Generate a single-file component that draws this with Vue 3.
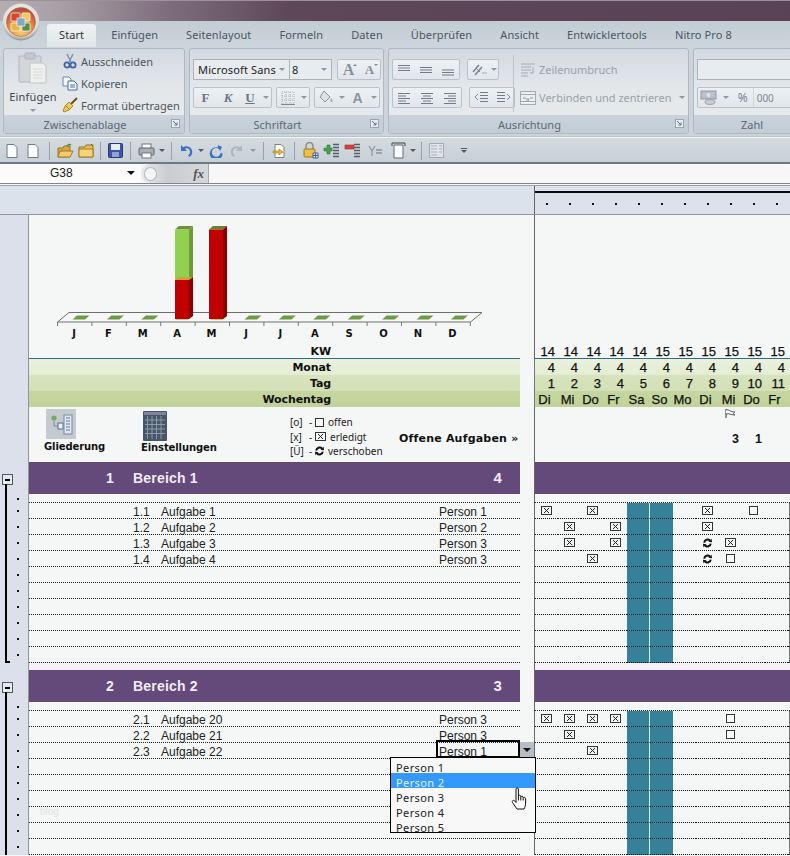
<script setup>
const tabs = ['Start', 'Einfügen', 'Seitenlayout', 'Formeln', 'Daten', 'Überprüfen', 'Ansicht', 'Entwicklertools', 'Nitro Pro 8']

const months = ['J', 'F', 'M', 'A', 'M', 'J', 'J', 'A', 'S', 'O', 'N', 'D']

const kw = [14, 14, 14, 14, 14, 15, 15, 15, 15, 15, 15]
const days = ['Di', 'Mi', 'Do', 'Fr', 'Sa', 'So', 'Mo', 'Di', 'Mi', 'Do', 'Fr']
const colNums = kw.map((_, i) => i + 1)

function fill(rows, total) {
  const out = rows.slice()
  while (out.length < total) out.push({ no: '', name: '', person: '', marks: {} })
  return out
}

const sections = [
  {
    no: 1,
    title: 'Bereich 1',
    count: 4,
    closed: true,
    rows: fill([
      { no: '1.1', name: 'Aufgabe 1', person: 'Person 1', marks: { 1: 'x', 3: 'x', 8: 'x', 10: 'o' } },
      { no: '1.2', name: 'Aufgabe 2', person: 'Person 2', marks: { 2: 'x', 4: 'x', 8: 'x' } },
      { no: '1.3', name: 'Aufgabe 3', person: 'Person 3', marks: { 2: 'x', 4: 'x', 8: 'u', 9: 'x' } },
      { no: '1.4', name: 'Aufgabe 4', person: 'Person 3', marks: { 3: 'x', 8: 'u', 9: 'o' } }
    ], 10)
  },
  {
    no: 2,
    title: 'Bereich 2',
    count: 3,
    closed: false,
    rows: fill([
      { no: '2.1', name: 'Aufgabe 20', person: 'Person 3', marks: { 1: 'x', 2: 'x', 3: 'x', 4: 'x', 9: 'o' } },
      { no: '2.2', name: 'Aufgabe 21', person: 'Person 3', marks: { 2: 'x', 9: 'o' } },
      { no: '2.3', name: 'Aufgabe 22', person: 'Person 1', marks: { 3: 'x' } }
    ], 9)
  }
]

const persons = ['Person 1', 'Person 2', 'Person 3', 'Person 4', 'Person 5']
</script>

<template>
  <div class="page">
    <svg class="defs" width="0" height="0">
      <symbol id="mark-x" viewBox="0 0 11 9">
        <rect x="0.5" y="0.5" width="10" height="8" fill="none" stroke="#333" />
        <path d="M3 2 L8 7 M8 2 L3 7" stroke="#222" fill="none" />
      </symbol>
      <symbol id="mark-o" viewBox="0 0 9 9">
        <rect x="0.5" y="0.5" width="8" height="8" fill="#fafafa" stroke="#333" />
      </symbol>
      <symbol id="mark-u" viewBox="0 0 9 10">
        <path d="M1.200 4.600 A3.500 3.500 0 0 1 7 2.400" fill="none" stroke="#111" stroke-width="2" />
        <path d="M5.500 3.800 L9 4.200 L8.600 .8 Z" fill="#111" />
        <path d="M7.800 5.600 A3.500 3.500 0 0 1 2 7.600" fill="none" stroke="#111" stroke-width="2" />
        <path d="M3.500 6.200 L0 5.800 L.4 9.200 Z" fill="#111" />
      </symbol>
      <symbol id="lines-left" viewBox="0 0 14 12">
        <path d="M1 1.5H13M1 4H9M1 6.5H13M1 9H9M1 11.5H13" stroke="#6f7b87" fill="none" />
      </symbol>
      <symbol id="lines-center" viewBox="0 0 14 12">
        <path d="M1 1.5H13M3 4H11M1 6.5H13M3 9H11M1 11.5H13" stroke="#6f7b87" fill="none" />
      </symbol>
      <symbol id="lines-right" viewBox="0 0 14 12">
        <path d="M1 1.5H13M5 4H13M1 6.5H13M5 9H13M1 11.5H13" stroke="#6f7b87" fill="none" />
      </symbol>
      <symbol id="launcher" viewBox="0 0 9 9">
        <rect x="0.5" y="0.5" width="8" height="8" fill="#e8ecf0" stroke="#9aa5b0" />
        <path d="M2 2 L6 6 M6 3.5 V6 H3.5" stroke="#5f6e7c" fill="none" />
      </symbol>
    </svg>

    <!-- office button -->
    <svg class="office" width="38" height="38" viewBox="0 0 38 38">
      <defs>
        <radialGradient id="ring" cx="50%" cy="40%" r="60%">
          <stop offset="0" stop-color="#f4f4f0" />
          <stop offset="0.8" stop-color="#dfe0da" />
          <stop offset="1" stop-color="#8d9088" />
        </radialGradient>
        <radialGradient id="core" cx="50%" cy="80%" r="70%">
          <stop offset="0" stop-color="#f5d477" />
          <stop offset="0.6" stop-color="#e8884a" />
          <stop offset="1" stop-color="#b9503a" />
        </radialGradient>
      </defs>
      <circle cx="19" cy="19" r="18.4" fill="url(#ring)" />
      <circle cx="19" cy="19" r="14.5" fill="url(#core)" stroke="#a8674a" stroke-width="0.6" />
      <rect x="9" y="10" width="9" height="8" rx="1" fill="#d2482f" stroke="#fff" stroke-width="0.7" />
      <rect x="20" y="10" width="8" height="8" rx="1" fill="#f0c95a" stroke="#fff" stroke-width="0.7" />
      <rect x="9" y="20" width="9" height="8" rx="1" fill="#e9b53c" stroke="#fff" stroke-width="0.7" />
      <rect x="20" y="20" width="8" height="8" rx="1" fill="#4f8f4b" stroke="#fff" stroke-width="0.7" />
      <rect x="15" y="15" width="8" height="8" fill="#7fa9c9" stroke="#fff" stroke-width="0.6" />
    </svg>

    <div class="titlebar"></div>

    <div class="tabs">
      <div v-for="(t, i) in tabs" :key="t" class="tab" :class="{ active: i === 0 }">{{ t }}</div>
    </div>

    <div class="ribbon">
      <section class="group g-clip">
        <div class="group-body clip-body">
          <div class="paste">
            <svg width="30" height="32" viewBox="0 0 30 32">
              <rect x="1" y="4" width="22" height="26" rx="1" fill="#d2d6da" stroke="#b3b8bd" />
              <rect x="7" y="1" width="10" height="6" rx="1" fill="#c4c8cc" stroke="#aeb3b8" />
              <path d="M12 11 H25 L28 14 V31 H12 Z" fill="#eff0ee" stroke="#c2c6c9" />
              <path d="M15 17H25M15 20H25M15 23H25M15 26H25" stroke="#d7d9da" />
            </svg>
            <span class="paste-label">Einfügen</span>
            <span class="caret paste-caret"></span>
          </div>
          <div class="clip-list">
            <div class="clip-item">
              <svg width="16" height="16" viewBox="0 0 16 16">
                <path d="M5 1 L9 9 M11 1 L7 9" stroke="#8a96a4" stroke-width="1.6" fill="none" />
                <circle cx="5" cy="12" r="2.6" fill="none" stroke="#3f63a8" stroke-width="1.8" />
                <circle cx="11" cy="12" r="2.6" fill="none" stroke="#3f63a8" stroke-width="1.8" />
              </svg>
              <span>Ausschneiden</span>
            </div>
            <div class="clip-item">
              <svg width="16" height="16" viewBox="0 0 16 16">
                <path d="M1 2H7L9 4V11H1Z" fill="#f4f6f8" stroke="#6c86a8" />
                <path d="M6 6H12L15 9V15H6Z" fill="#fff" stroke="#3f6aa3" />
                <path d="M8 10H13M8 12H13" stroke="#3f6aa3" />
              </svg>
              <span>Kopieren</span>
            </div>
            <div class="clip-item">
              <svg width="16" height="16" viewBox="0 0 16 16">
                <path d="M15 1 L9 7" stroke="#6d4d2a" stroke-width="2" />
                <path d="M7 5 L11 9 L7 13 L2 15 L1 14 L3 9 Z" fill="#e8c85a" stroke="#a98a2c" />
                <path d="M4 9 L7 12" stroke="#a98a2c" />
              </svg>
              <span>Format übertragen</span>
            </div>
          </div>
        </div>
        <footer class="group-label">Zwischenablage<svg class="launch" width="9" height="9"><use href="#launcher" /></svg></footer>
      </section>

      <section class="group g-font">
        <div class="group-body font-body">
          <div class="ctrl-row">
            <div class="combo font-name"><span>Microsoft Sans</span><span class="caret"></span></div>
            <div class="combo font-size"><span>8</span><span class="caret"></span></div>
            <div class="seg grow-seg">
              <span class="btn w21 big-a">A<i class="mini-up"></i></span>
              <span class="btn w21 small-a">A<i class="mini-down"></i></span>
            </div>
          </div>
          <div class="ctrl-row second">
            <div class="seg fku">
              <span class="btn w23 sf">F</span>
              <span class="btn w22 sf it">K</span>
              <span class="btn w22 sf un">U</span>
              <span class="btn w10"><span class="caret"></span></span>
            </div>
            <div class="seg bord">
              <span class="btn w22">
                <svg width="14" height="14" viewBox="0 0 14 14">
                  <path d="M1 1H13V13H1ZM1 5H13M1 9H13M5 1V13M9 1V13" stroke="#a7afb8" stroke-dasharray="1 1" fill="none" />
                  <path d="M0 13.5H14" stroke="#7f8a96" />
                </svg>
              </span>
              <span class="btn w11"><span class="caret"></span></span>
            </div>
            <div class="seg paint">
              <span class="btn w22">
                <svg width="16" height="15" viewBox="0 0 16 15">
                  <path d="M6 1 L12 7 L7 12 L2 7 Z" fill="#dfe2e4" stroke="#8c949c" />
                  <path d="M13 8 C15 10 15 12 13.5 12 C12 12 12 10 13 8Z" fill="#a6adb4" />
                </svg>
              </span>
              <span class="btn w11"><span class="caret"></span></span>
              <span class="btn w22 sf paint-a">A</span>
              <span class="btn w11"><span class="caret"></span></span>
            </div>
          </div>
        </div>
        <footer class="group-label">Schriftart<svg class="launch" width="9" height="9"><use href="#launcher" /></svg></footer>
      </section>

      <section class="group g-align">
        <div class="group-body align-body">
          <div class="align-grid">
            <div class="ctrl-row">
              <div class="seg">
                <span class="btn w22"><svg width="14" height="12" viewBox="0 0 14 12"><path d="M1 1.5H13M1 4H13M1 6.5H13" stroke="#6f7b87" /></svg></span>
                <span class="btn w22"><svg width="14" height="12" viewBox="0 0 14 12"><path d="M1 3.5H13M1 6H13M1 8.5H13" stroke="#6f7b87" /></svg></span>
                <span class="btn w22"><svg width="14" height="12" viewBox="0 0 14 12"><path d="M1 6H13M1 8.5H13M1 11H13" stroke="#6f7b87" /></svg></span>
              </div>
              <div class="seg orient">
                <span class="btn w21">
                  <svg width="16" height="14" viewBox="0 0 16 14">
                    <path d="M2 9 L8 2 M4 12 L11 4" stroke="#7b8793" stroke-width="1.6" />
                    <path d="M5 5 L9 9" stroke="#7b8793" />
                    <path d="M11 10 H16" stroke="#a7afb8" />
                  </svg>
                </span>
                <span class="btn w9"><span class="caret"></span></span>
              </div>
            </div>
            <div class="ctrl-row second">
              <div class="seg">
                <span class="btn w22"><svg width="14" height="12"><use href="#lines-left" /></svg></span>
                <span class="btn w23"><svg width="14" height="12"><use href="#lines-center" /></svg></span>
                <span class="btn w23"><svg width="14" height="12"><use href="#lines-right" /></svg></span>
              </div>
              <div class="seg indent">
                <span class="btn w22">
                  <svg width="15" height="14" viewBox="0 0 15 14">
                    <path d="M6 1.5H14M6 4.5H14M6 7.5H14M6 10.5H14" stroke="#6f7b87" />
                    <path d="M4 3 L1 6 L4 9" fill="none" stroke="#5f90b5" />
                  </svg>
                </span>
                <span class="btn w22">
                  <svg width="15" height="14" viewBox="0 0 15 14">
                    <path d="M1 1.5H9M1 4.5H9M1 7.5H9M1 10.5H9" stroke="#6f7b87" />
                    <path d="M11 3 L14 6 L11 9" fill="none" stroke="#5f90b5" />
                  </svg>
                </span>
              </div>
            </div>
          </div>
          <div class="vsep"></div>
          <div class="wrap-col">
            <div class="wrap-item">
              <svg width="16" height="16" viewBox="0 0 16 16">
                <path d="M1 2H15M1 5H11M1 8H11M1 11H8M1 14H8" stroke="#a4abb2" />
                <path d="M13 5 V11 H10" fill="none" stroke="#a4abb2" />
              </svg>
              <span>Zeilenumbruch</span>
            </div>
            <div class="wrap-item">
              <svg width="16" height="16" viewBox="0 0 16 16">
                <rect x="0.5" y="1.5" width="15" height="13" fill="#eceff1" stroke="#a4abb2" />
                <path d="M0.5 4.5H15.5M0.5 11.5H15.5" stroke="#a4abb2" />
                <path d="M3 8H6M10 8H13" stroke="#8a929a" />
                <text x="6" y="10.5" font-size="6" font-family="Liberation Sans, sans-serif" fill="#8a929a">a</text>
              </svg>
              <span>Verbinden und zentrieren</span>
              <span class="caret merge-caret"></span>
            </div>
          </div>
        </div>
        <footer class="group-label">Ausrichtung<svg class="launch" width="9" height="9"><use href="#launcher" /></svg></footer>
      </section>

      <section class="group g-num">
        <div class="group-body num-body">
          <div class="combo num-format"></div>
          <div class="ctrl-row second">
            <div class="seg num-seg">
              <span class="btn w23">
                <svg width="18" height="16" viewBox="0 0 18 16">
                  <rect x="1" y="1" width="15" height="8" fill="#b9c2ca" stroke="#8d98a3" />
                  <circle cx="8.5" cy="5" r="2" fill="#dfe3e6" />
                  <ellipse cx="10" cy="12" rx="5" ry="2.4" fill="#c9cdd0" stroke="#9aa2aa" />
                </svg>
              </span>
              <span class="btn w12"><span class="caret"></span></span>
              <span class="btn w21 pct">%</span>
              <span class="btn w23 pct small">000</span>
              <span class="btn w30"></span>
            </div>
          </div>
        </div>
        <footer class="group-label">Zahl</footer>
      </section>
    </div>

    <div class="qat">
      <span class="qi"><svg width="12" height="14" viewBox="0 0 12 14"><path d="M1 .5H8L11 3.5V13.5H1Z" fill="#fbfcfd" stroke="#6d7a87" /></svg></span>
      <span class="qi"><svg width="12" height="14" viewBox="0 0 12 14"><path d="M1 .5H8L11 3.5V13.5H1Z" fill="#fbfcfd" stroke="#6d7a87" /></svg></span>
      <i class="qs w11"></i>
      <span class="qi">
        <svg width="17" height="15" viewBox="0 0 17 15">
          <path d="M1 5H6L7 3H13V14H1Z" fill="#dca43a" stroke="#9a7224" />
          <path d="M3 8H16L13 14H1Z" fill="#f2cd6a" stroke="#a17b2a" />
          <path d="M10 3 C11 1 13 1 14 2" stroke="#3a9a3e" fill="none" stroke-width="1.4" />
        </svg>
      </span>
      <span class="qi">
        <svg width="17" height="15" viewBox="0 0 17 15">
          <path d="M1 4H7L8 2H15V14H1Z" fill="#eebd50" stroke="#9a7224" />
          <path d="M1 6H15V14H1Z" fill="#f4d478" stroke="#a17b2a" />
          <path d="M13 1 L15 3" stroke="#555" />
        </svg>
      </span>
      <i class="qs w8"></i>
      <span class="qi">
        <svg width="15" height="15" viewBox="0 0 15 15">
          <rect x=".5" y=".5" width="14" height="14" rx="1" fill="#3c55a5" stroke="#29397a" />
          <rect x="3" y="1" width="9" height="6" fill="#e8edf5" />
          <rect x="4" y="9" width="7" height="5" fill="#8fa3cf" />
        </svg>
      </span>
      <i class="qs w10"></i>
      <span class="qi">
        <svg width="17" height="16" viewBox="0 0 17 16">
          <rect x="4" y="1" width="9" height="5" fill="#fbfbfb" stroke="#70787f" />
          <rect x="1" y="5" width="15" height="7" rx="1" fill="#a9b0b7" stroke="#5d656d" />
          <rect x="4" y="10" width="9" height="5" fill="#fbfbfb" stroke="#70787f" />
        </svg>
      </span>
      <span class="qc"><span class="caret dark"></span></span>
      <i class="qs w9"></i>
      <span class="qi">
        <svg width="14" height="14" viewBox="0 0 14 14">
          <path d="M2 1 V7 H8 L5.8 4.8 C8 3.4 10.6 4.6 11 7.4 C11.2 9 10.4 10.6 9 11.6 L10.8 13 C13.4 11 14 7.6 12.4 5 C10.6 2.2 7 1.6 4.2 3.2 Z" fill="#3b6fc0" />
        </svg>
      </span>
      <span class="qc w9"><span class="caret dark"></span></span>
      <span class="qi">
        <svg width="14" height="14" viewBox="0 0 14 14">
          <path d="M9 1 L13 3 L11 7 L10 5 A4.4 4.4 0 1 0 11.6 9 L13.6 9.4 A6.4 6.4 0 1 1 8.8 3.4 Z" fill="#3b6fc0" />
        </svg>
      </span>
      <span class="qi">
        <svg width="14" height="13" viewBox="0 0 14 13">
          <path d="M12 1 V7 H6 L8.2 4.8 C6 3.4 3.4 4.6 3 7.4 C2.8 9 3.6 10.6 5 11.6 L3.2 13 C.6 11 0 7.6 1.6 5 C3.4 2.2 7 1.6 9.8 3.2 Z" fill="#aeb7c0" />
        </svg>
      </span>
      <span class="qc"><span class="caret"></span></span>
      <i class="qs w11"></i>
      <span class="qi">
        <svg width="14" height="14" viewBox="0 0 14 14">
          <path d="M3 .5H9L12 3.5V13.5H3Z" fill="#fbfcf6" stroke="#7b8186" />
          <path d="M1 7 H7 V5 L11 8 L7 11 V9 H1Z" fill="#eeb92f" stroke="#a07a14" stroke-width=".6" />
        </svg>
      </span>
      <i class="qs w10"></i>
      <span class="qi">
        <svg width="17" height="17" viewBox="0 0 17 17">
          <path d="M4 7 V4 A3.5 3.5 0 0 1 11 4 V7" fill="none" stroke="#8d8d80" stroke-width="1.5" />
          <rect x="2" y="7" width="11" height="8" rx="1" fill="#edbf44" stroke="#9a7a1c" />
          <path d="M11 11H16V16H11Z" fill="#e6eaf1" stroke="#3f5e96" />
          <path d="M13.5 11V16M11 13.5H16" stroke="#3f5e96" />
        </svg>
      </span>
      <span class="qi">
        <svg width="17" height="15" viewBox="0 0 17 15">
          <path d="M10 1.5H16M10 4.5H16M10 7.5H16M10 10.5H16M10 13.5H16" stroke="#566069" stroke-width="1.3" />
          <path d="M1 5H4V2H7V5H9V8H7V11H4V8H1Z" fill="#49a24a" stroke="#2d7a30" stroke-width=".6" />
        </svg>
      </span>
      <span class="qi">
        <svg width="17" height="15" viewBox="0 0 17 15">
          <path d="M10 1.5H16M10 4.5H16M10 7.5H16M10 10.5H16M10 13.5H16" stroke="#566069" stroke-width="1.3" />
          <rect x="1" y="2" width="9" height="4" fill="#d8413a" stroke="#a32a25" stroke-width=".6" />
        </svg>
      </span>
      <span class="qi wide">
        <svg width="15" height="14" viewBox="0 0 15 14">
          <path d="M1 2 L4 7 L7 2 M4 7 V12" fill="none" stroke="#8f98a0" stroke-width="1.3" />
          <path d="M8 6H14M8 9H14" stroke="#66707a" />
        </svg>
      </span>
      <span class="qi">
        <svg width="15" height="17" viewBox="0 0 15 17">
          <path d="M3 3H12V16H3Z" fill="#fbfcfd" stroke="#5d6a76" />
          <path d="M1 1V4M1 1H14M14 1V4" fill="none" stroke="#39424a" />
        </svg>
      </span>
      <span class="qc w8"><span class="caret dark"></span></span>
      <i class="qs w9"></i>
      <span class="qi">
        <svg width="15" height="15" viewBox="0 0 15 15">
          <rect x=".5" y=".5" width="14" height="14" fill="#dfe4e8" stroke="#a3acb4" />
          <path d="M2 3H8M2 6H8M2 9H8M2 12H8M10 3H13M10 6H13M10 9H13" stroke="#a9b2ba" />
        </svg>
      </span>
      <span class="customize"><i></i><span class="caret dark"></span></span>
    </div>

    <div class="formula">
      <div class="namebox"><span>G38</span><span class="caret black"></span></div>
      <div class="fx-cap"><i class="fx-knob"></i><em>fx</em></div>
      <div class="fx-input"></div>
    </div>

    <div class="sheet">
      <div class="colhead">
        <div class="colhead-left"></div>
        <div class="colhead-right">
          <div class="thick"></div>
          <div class="gantt-grid">
            <span v-for="n in colNums" :key="n" class="hdot"></span>
          </div>
        </div>
      </div>

      <div class="row chart-row">
        <div class="gutter"></div>
        <div class="main">
          <svg class="chart" width="491" height="129" viewBox="29 215 491 129">
            <path d="M57.5 322 L69 312.5 H482 L470.5 322 Z" fill="#f7f7f7" stroke="#6e6e6e" />
            <path v-for="m in 13" :key="'t' + m" :d="`M${57.5 + (m - 1) * 34.4} 322 V326`" stroke="#777" fill="none" />
            <path
              v-for="m in 12"
              :key="'g' + m"
              :d="`M${72.5 + (m - 1) * 34.4} 319.5 L${77 + (m - 1) * 34.4} 315.5 H${89.5 + (m - 1) * 34.4} L${85 + (m - 1) * 34.4} 319.5 Z`"
              fill="#6f9a45"
            />
            <!-- April -->
            <path d="M175 229.5 L179 226 H193 L189 229.5 Z" fill="#6f8f3a" />
            <rect x="175" y="229.5" width="14" height="50.5" fill="#92d050" />
            <path d="M189 229.5 L193 226 V277 L189 280 Z" fill="#6e9a3c" />
            <path d="M175 280 L179 277 H193 L189 280 Z" fill="#c9a23a" />
            <rect x="175" y="280" width="14" height="39" fill="#c00000" />
            <path d="M189 280 L193 277 V316 L189 319 Z" fill="#8a0000" />
            <!-- Mai -->
            <path d="M209 229.5 L213 226 H227 L223 229.5 Z" fill="#6f7f30" />
            <rect x="209" y="229.5" width="14" height="89.5" fill="#c00000" />
            <path d="M223 229.5 L227 226 V316 L223 319 Z" fill="#8a0000" />
            <text
              v-for="(m, i) in months"
              :key="'l' + i"
              :x="74 + i * 34.4"
              y="336.500"
              text-anchor="middle"
              class="chart-label"
            >{{ m }}</text>
          </svg>
        </div>
        <div class="spacer"></div>
        <div class="gantt plain"></div>
      </div>

      <div class="row band-kw">
        <div class="gutter"></div>
        <div class="main band">KW</div>
        <div class="spacer"></div>
        <div class="gantt gantt-grid nums">
          <span v-for="(k, i) in kw" :key="i">{{ k }}</span>
        </div>
      </div>
      <div class="row band-month">
        <div class="gutter"></div>
        <div class="main band">Monat</div>
        <div class="spacer"></div>
        <div class="gantt gantt-grid nums">
          <span v-for="n in colNums" :key="n">4</span>
        </div>
      </div>
      <div class="row band-day">
        <div class="gutter"></div>
        <div class="main band">Tag</div>
        <div class="spacer"></div>
        <div class="gantt gantt-grid nums">
          <span v-for="n in colNums" :key="n">{{ n }}</span>
        </div>
      </div>
      <div class="row band-weekday">
        <div class="gutter"></div>
        <div class="main band">Wochentag</div>
        <div class="spacer"></div>
        <div class="gantt gantt-grid nums centered">
          <span v-for="(d, i) in days" :key="i">{{ d }}</span>
        </div>
      </div>

      <div class="row actions-row">
        <div class="gutter"></div>
        <div class="main actions">
          <div class="action a-outline">
            <div class="a-icon outline-icon">
              <svg width="30" height="30" viewBox="0 0 30 30">
                <rect width="30" height="30" fill="#c5c9d0" />
                <circle cx="8" cy="9" r="2.6" fill="#6fae5c" />
                <path d="M8 12 V17 H12" stroke="#7d8aa0" fill="none" />
                <rect x="12" y="14" width="5" height="6" fill="#eef1f6" stroke="#53688c" />
                <rect x="18" y="6" width="8" height="19" fill="#dfe6f1" stroke="#7d8aa0" />
                <path d="M20 9H24M20 12H24M20 15H24M20 18H24M20 21H24" stroke="#6b7c96" />
              </svg>
            </div>
            <span class="a-label">Gliederung</span>
          </div>
          <div class="action a-settings">
            <div class="a-icon">
              <svg width="24" height="30" viewBox="0 0 24 30">
                <rect width="24" height="30" rx="1" fill="#47566a" />
                <rect x="1" y="1" width="22" height="3" fill="#7d8896" />
                <path d="M4.5 5V28M9 5V28M13.500 5V28M18 5V28M2 9H22M2 13.500H22M2 18H22M2 22.500H22" stroke="#8d99a8" />
              </svg>
            </div>
            <span class="a-label">Einstellungen</span>
          </div>
          <div class="legend">
            <div class="legend-line"><span class="lg-key">[o]</span><span class="lg-dash">-</span><svg width="9" height="9"><use href="#mark-o" /></svg><span class="lg-txt">offen</span></div>
            <div class="legend-line"><span class="lg-key">[x]</span><span class="lg-dash">-</span><svg width="11" height="9"><use href="#mark-x" /></svg><span class="lg-txt">erledigt</span></div>
            <div class="legend-line"><span class="lg-key">[Ü]</span><span class="lg-dash">-</span><svg width="9" height="10"><use href="#mark-u" /></svg><span class="lg-txt">verschoben</span></div>
          </div>
          <div class="open-tasks">Offene Aufgaben <b>»</b></div>
        </div>
        <div class="spacer"></div>
        <div class="gantt gantt-grid totals">
          <span class="flag">
            <svg width="11" height="9" viewBox="0 0 11 9">
              <path d="M1 0 V9" stroke="#333" />
              <path d="M1 1 C4 0 5 3 10 3 C8 4 8 5 10 6 C6 6 4 4 1 5" fill="#fafafa" stroke="#333" stroke-width=".8" />
            </svg>
          </span>
          <span class="tot t9">3</span>
          <span class="tot t10">1</span>
        </div>
      </div>

      <div v-for="(sec, s) in sections" :key="sec.no" class="section">
        <i class="bracket" :class="{ closed: sec.closed }"></i>
        <div class="row sec-head">
          <div class="gutter"><span class="minus"></span></div>
          <div class="main sec-title">
            <span class="sec-no">{{ sec.no }}</span>
            <span class="sec-name">{{ sec.title }}</span>
            <span class="sec-count">{{ sec.count }}</span>
          </div>
          <div class="spacer"></div>
          <div class="gantt sec-fill"></div>
        </div>
        <div class="row gap-row">
          <div class="gutter dotted"></div>
          <div class="main dotline"></div>
          <div class="spacer"></div>
          <div class="gantt dotline"></div>
        </div>
        <div v-for="(r, i) in sec.rows" :key="i" class="row task">
          <div class="gutter dotted"></div>
          <div class="main task-main">
            <span>{{ r.no }}</span>
            <span>{{ r.name }}</span>
            <span>{{ r.person }}</span>
          </div>
          <div class="spacer"></div>
          <div class="gantt gantt-grid task-cells">
            <span
              v-for="n in colNums"
              :key="n"
              class="cell"
              :class="{ sat: n === 5, sun: n === 6 }"
            >
              <svg v-if="r.marks[n] === 'x'" width="11" height="9"><use href="#mark-x" /></svg>
              <svg v-else-if="r.marks[n] === 'u'" width="9" height="10"><use href="#mark-u" /></svg>
              <svg v-else-if="r.marks[n]" width="9" height="9"><use href="#mark-o" /></svg>
            </span>
            <span class="cell last"></span>
          </div>
        </div>
        <div v-if="s === 0" class="row sec-gap">
          <div class="gutter"></div>
          <div class="main tint"></div>
          <div class="spacer"></div>
          <div class="gantt tint"></div>
        </div>
      </div>

      <span class="watermark">blog</span>

      <!-- active cell and its open list lie over the grid -->
      <div class="active-cell"></div>
      <div class="drop-btn"><span class="caret black"></span></div>
      <ul class="dropdown">
        <li v-for="(p, i) in persons" :key="p" :class="{ hot: i === 1 }">{{ p }}</li>
      </ul>
      <svg class="hand" width="18" height="24" viewBox="0 0 18 24">
        <path
          d="M5 2 C5 .6 7.400 .6 7.400 2 V9 C7.400 8 9.800 8 9.800 9.300 V10 C10 9 12.200 9 12.200 10.300 V11 C12.500 10 14.600 10.300 14.600 11.600 V16 C14.600 18.500 14 20 13 22 H6 L1.500 15.500 C.5 14 2.400 12.500 3.600 13.800 L5 15.500 Z"
          fill="#fff"
          stroke="#111"
          stroke-width="1"
          stroke-linejoin="round"
        />
        <path d="M7.400 9 V13.500 M9.800 10 V13.500 M12.200 11 V13.500" stroke="#111" fill="none" />
      </svg>
    </div>
  </div>
</template>

<style>
html, body {
  margin: 0;
  background: #f5f6f6;
}
</style>

<style scoped>
.page {
  position: relative;
  width: 790px;
  height: 856px;
  overflow: hidden;
  display: flex;
  flex-direction: column;
  font-family: "Noto Sans", "Liberation Sans", sans-serif;
  background: #f5f6f6;
  color: #222;
}

.defs {
  position: absolute;
}

.office {
  position: absolute;
  left: 2px;
  top: 3px;
  z-index: 3;
}

.titlebar {
  height: 21px;
  flex-shrink: 0;
  background: linear-gradient(90deg, #b4adb2 0, #a89fa6 60px, #7d6d7a 170px, #5d4759 290px, #5a4256 100%);
  border-top: 1px solid #9a9298;
  box-sizing: border-box;
}

.tabs {
  height: 26px;
  flex-shrink: 0;
  display: flex;
  align-items: flex-end;
  padding-left: 44px;
  background: linear-gradient(#c3ccd4, #ccd5db);
}

.tab {
  height: 23px;
  line-height: 22px;
  padding: 0 14px;
  font-size: 11px;
  letter-spacing: 0.1px;
  color: #4a5763;
}

.tab.active {
  background: linear-gradient(#f0f3f5, #dfe5e9);
  border-radius: 3px 3px 0 0;
  color: #333;
  margin-left: 3px;
  padding: 0 12px;
  margin-right: 1px;
}

.ribbon {
  height: 90px;
  flex-shrink: 0;
  box-sizing: border-box;
  display: flex;
  gap: 4px;
  padding: 1px 0 2px 3px;
  background: #ccd4da;
  border-bottom: 1px solid #bac2c9;
  overflow: hidden;
}

.group {
  display: flex;
  flex-direction: column;
  flex-shrink: 0;
  box-sizing: border-box;
  height: 86px;
  border: 1px solid #aeb8c1;
  border-radius: 3px;
  overflow: hidden;
  background: linear-gradient(#d3d9e1, #e3e7ea 45%, #e8ebed 100%);
}

.g-clip { width: 182px; }
.g-font { width: 195px; }
.g-align { width: 301px; }
.g-num { width: 136px; }

.group-body {
  flex: 1;
  min-height: 0;
}

.group-label {
  position: relative;
  height: 18px;
  line-height: 20px;
  padding-right: 18px;
  text-align: center;
  font-size: 11px;
  color: #5c6873;
  background: linear-gradient(#cad3dc, #c3ccd5);
}

.launch {
  position: absolute;
  right: 4px;
  top: 4px;
}

.clip-body {
  display: flex;
}

.paste {
  width: 58px;
  display: flex;
  flex-direction: column;
  align-items: center;
  padding-top: 3px;
}

.paste-label {
  margin-top: 5px;
  font-size: 11px;
  letter-spacing: 0.2px;
  color: #3b4650;
}

.paste-caret {
  margin-top: 5px;
}

.caret {
  display: inline-block;
  width: 0;
  height: 0;
  border-left: 3px solid transparent;
  border-right: 3px solid transparent;
  border-top: 3px solid #8e98a2;
}

.caret.dark {
  border-top-color: #4e5a66;
}

.caret.black {
  border-left-width: 4px;
  border-right-width: 4px;
  border-top: 4px solid #111;
}

.clip-list {
  padding-top: 1px;
}

.clip-item {
  height: 22px;
  display: flex;
  align-items: center;
  gap: 3px;
  font-size: 11px;
  letter-spacing: 0;
  white-space: nowrap;
  color: #4b5660;
}

.font-body {
  padding: 10px 0 0 3px;
}

.ctrl-row {
  display: flex;
  align-items: stretch;
  gap: 4px;
  height: 21px;
}

.ctrl-row.second {
  margin-top: 7px;
}

.combo {
  display: flex;
  align-items: center;
  justify-content: space-between;
  box-sizing: border-box;
  padding: 0 4px 1px;
  background: #e9ecef;
  border: 1px solid #aab3bc;
  font-size: 11px;
  color: #222;
}

.font-name {
  width: 97px;
  letter-spacing: 0.15px;
}

.font-size {
  width: 42px;
  margin-left: -4px;
  border-left: 0;
  padding-left: 2px;
}

.seg {
  display: flex;
  align-items: center;
  box-sizing: border-box;
  background: linear-gradient(#eef1f3, #e2e6ea);
  border: 1px solid #b9c2ca;
  border-radius: 2px;
}

.btn {
  display: flex;
  align-items: center;
  justify-content: center;
  height: 100%;
  position: relative;
}

.w9 { width: 9px; }
.w10 { width: 10px; }
.w11 { width: 11px; }
.w12 { width: 12px; }
.w21 { width: 21px; }
.w22 { width: 22px; }
.w23 { width: 23px; }
.w30 { width: 30px; }

.grow-seg {
  margin-left: 1px;
}

.big-a, .small-a, .sf {
  font-family: "Liberation Serif", serif;
  font-weight: 700;
  color: #84909b;
}

.big-a { font-size: 16px; }
.small-a { font-size: 13px; }

.mini-up, .mini-down {
  position: absolute;
  right: 2px;
  top: 4px;
  width: 0;
  height: 0;
  border-left: 2px solid transparent;
  border-right: 2px solid transparent;
}

.mini-up { border-bottom: 2px solid #7f8a96; }
.mini-down { border-top: 2px solid #7f8a96; }

.sf {
  font-size: 13px;
  color: #68788a;
}

.it { font-style: italic; }
.un { text-decoration: underline; }

.paint-a {
  font-family: "Liberation Sans", sans-serif;
  font-size: 14px;
  color: #8a949e;
}

.fku { width: 79px; }
.bord { width: 34px; }
.paint { width: 66px; }

.align-body {
  display: flex;
  padding: 10px 0 0 3px;
}

.align-grid {
  width: 121px;
}

.orient, .indent {
  margin-left: 3px;
}

.vsep {
  width: 1px;
  height: 57px;
  margin: -4px 6px 0 0;
  background: #bcc4cb;
}

.wrap-col {
  display: flex;
  flex-direction: column;
}

.wrap-item {
  display: flex;
  align-items: center;
  gap: 3px;
  height: 21px;
  font-size: 11px;
  letter-spacing: 0;
  white-space: nowrap;
  color: #9aa2a9;
}

.wrap-item + .wrap-item {
  margin-top: 7px;
}

.merge-caret {
  margin-left: 5px;
}

.num-body {
  padding: 10px 0 0 3px;
}

.num-format {
  width: 120px;
  height: 21px;
}

.num-seg {
  width: 110px;
}

.pct {
  font-size: 12px;
  color: #7b8793;
}

.pct.small {
  font-size: 10px;
  border-left: 1px solid #cfd5da;
}

.qat {
  height: 26px;
  flex-shrink: 0;
  box-sizing: border-box;
  display: flex;
  align-items: center;
  padding: 1px 0 0 1.5px;
  margin-top: 1px;
  background: linear-gradient(#d3dae0, #c8d0d7);
  border-bottom: 2px solid #6f7780;
}

.qi {
  width: 21px;
  display: flex;
  justify-content: center;
  flex-shrink: 0;
}

.qi.wide { width: 25px; }

.qc {
  width: 10px;
  display: flex;
  justify-content: center;
  flex-shrink: 0;
}

.qc.w9 { width: 9px; }
.qc.w8 { width: 8px; }

.qs {
  flex-shrink: 0;
  height: 18px;
  background: linear-gradient(#99a2aa, #99a2aa) center / 1px 100% no-repeat;
}

.qs.w8 { width: 8px; }
.qs.w9 { width: 9px; }
.qs.w10 { width: 10px; }
.qs.w11 { width: 11px; }

.customize {
  margin-left: 14px;
  display: flex;
  flex-direction: column;
  align-items: center;
  gap: 1px;
}

.customize i {
  width: 6px;
  height: 1px;
  background: #4e5a66;
}

.formula {
  height: 20px;
  flex-shrink: 0;
  box-sizing: border-box;
  display: flex;
  background: #f4f5f6;
  border-bottom: 1px solid #7f868d;
}

.namebox {
  width: 141px;
  display: flex;
  align-items: center;
  justify-content: space-between;
  padding: 0 6px 2px 50px;
  box-sizing: border-box;
  font-family: "Liberation Sans", sans-serif;
  font-size: 12px;
  background: #fbfbfb;
}

.fx-cap {
  width: 68px;
  position: relative;
  display: flex;
  align-items: center;
  justify-content: flex-end;
  padding-right: 4px;
  box-sizing: border-box;
  border-radius: 10px 0 0 10px;
  background: linear-gradient(90deg, #e8eaec, #c9cdd1 40%, #d5d8db);
  border-right: 1px solid #a2a9b0;
}

.fx-knob {
  position: absolute;
  left: 3px;
  top: 3px;
  width: 11px;
  height: 12px;
  border-radius: 50%;
  background: #f3f5f6;
  border: 1px solid #b4bac0;
}

.fx-cap em {
  font-family: "Liberation Serif", serif;
  font-weight: 700;
  font-size: 13px;
  color: #4f5458;
}

.fx-input {
  flex: 1;
  background: #f7f7f7;
}

.sheet {
  position: relative;
  flex: 1;
  min-height: 0;
  overflow: hidden;
}

.colhead {
  display: flex;
  height: 30px;
  box-sizing: border-box;
  margin-top: 1px;
  border-top: 1px solid #9aa1a8;
  border-bottom: 1px solid #9097a0;
  background: #dbe2ec;
}

.colhead-left {
  width: 534px;
}

.colhead-right {
  flex: 1;
  border-left: 1px solid #666;
}

.thick {
  height: 2px;
  margin-top: 5px;
  background: #0a0a0a;
}

.hdot {
  display: block;
  width: 2px;
  height: 2px;
  margin: 10px auto 0;
  background: #111;
}

.gantt-grid {
  display: grid;
  grid-template-columns: repeat(11, 23px) 2px;
}

.row {
  display: grid;
  grid-template-columns: 29px 491px 14px 256px;
  grid-template-rows: 100%;
}

.gutter {
  box-sizing: border-box;
  background: #dbe0eb;
  border-right: 1px solid #8f949e;
}

.spacer {
  background: #f5f6f6;
}

.gantt {
  box-sizing: border-box;
  border-left: 1px solid #666;
  background: #f5f6f6;
}

.main {
  background: #f5f6f6;
  min-width: 0;
  box-sizing: border-box;
}

.chart-row {
  height: 129px;
}

.chart {
  display: block;
}

.chart-label {
  font-family: "DejaVu Sans", sans-serif;
  font-weight: 700;
  font-size: 10px;
  fill: #111;
}

.band {
  font-family: "DejaVu Sans", sans-serif;
  font-weight: 700;
  font-size: 11px;
  text-align: right;
  padding-right: 189px;
  color: #111;
  letter-spacing: -0.1px;
}

.nums {
  font-family: "Liberation Sans", sans-serif;
  font-size: 13px;
  color: #111;
  -webkit-text-stroke: 0.25px #111;
  text-align: right;
}

.nums span {
  padding-right: 3px;
}

.nums.centered {
  text-align: center;
}

.nums.centered span {
  padding-right: 4px;
  white-space: nowrap;
}

.band-kw {
  height: 15px;
  line-height: 15px;
}

.band-kw .band, .band-kw .gantt {
  border-bottom: 1px solid #2c6a85;
}

.band-month, .band-day, .band-weekday {
  height: 16px;
  line-height: 17px;
}

.band-month .band, .band-month .gantt { background: linear-gradient(#eaf1dd, #e3ecd3); }
.band-day .band, .band-day .gantt { background: linear-gradient(#d7e3bc, #d3dfb6); }
.band-weekday .band, .band-weekday .gantt { background: linear-gradient(#c5d79f, #c0d298); }

.band-month .gantt, .band-day .gantt, .band-weekday .gantt {
  border-left-color: #777;
}

.actions-row {
  height: 55px;
}

.actions {
  display: flex;
  padding-left: 15px;
}

.action {
  display: flex;
  flex-direction: column;
  height: 100%;
  box-sizing: border-box;
  position: relative;
}

.a-outline {
  width: 97px;
  padding: 2px 0 0 2px;
}

.a-settings {
  width: 149px;
  padding: 4px 0 0 2px;
}

.a-icon {
  height: 30px;
}

.a-icon svg {
  display: block;
}

.a-label {
  font-family: "DejaVu Sans", sans-serif;
  font-weight: 700;
  font-size: 10px;
  letter-spacing: -0.1px;
  color: #111;
  margin: 1px 0 0 -2px;
  white-space: nowrap;
}

.a-outline .a-label {
  margin-top: 2px;
}

.legend {
  width: 109px;
  padding-top: 8px;
  font-size: 10px;
  line-height: 14.5px;
  color: #222;
}

.legend-line {
  display: flex;
  align-items: center;
  white-space: nowrap;
}

.lg-key {
  width: 19px;
}

.lg-dash {
  width: 6px;
}

.lg-txt {
  margin-left: 4px;
}

.open-tasks {
  font-family: "DejaVu Sans", sans-serif;
  font-weight: 700;
  font-size: 11px;
  letter-spacing: 0.2px;
  color: #111;
  padding-top: 25px;
  white-space: nowrap;
}

.totals {
  position: relative;
  font-family: "Liberation Sans", sans-serif;
  font-weight: 700;
  font-size: 12.5px;
  color: #111;
  grid-template-rows: 13px 1fr;
}

.flag {
  grid-column: 9;
  grid-row: 1;
  text-align: center;
  padding-top: 2px;
}

.flag svg {
  display: block;
  margin: 0 auto;
}

.tot {
  grid-row: 2;
  text-align: right;
  padding: 12px 3px 0 0;
}

.t9 { grid-column: 9; }
.t10 { grid-column: 10; }

.section {
  position: relative;
}

.bracket {
  position: absolute;
  left: 5px;
  top: 22px;
  bottom: 0;
  width: 5px;
  box-sizing: border-box;
  border-left: 2px solid #000;
  z-index: 1;
}

.bracket.closed {
  bottom: 7px;
  border-bottom: 2px solid #000;
}

.minus {
  display: block;
  box-sizing: border-box;
  width: 11px;
  height: 11px;
  margin: 12px 0 0 2px;
  border: 1px solid #555;
  background: linear-gradient(#000, #000) center / 5px 2px no-repeat, #e6e9f0;
}

.sec-head {
  height: 32px;
}

.sec-title {
  display: grid;
  grid-template-columns: 85px 1fr auto;
  column-gap: 19px;
  align-items: center;
  padding: 0 18px 1px 0;
  background: #64497b;
  color: #f1eef3;
  font-family: "Liberation Sans", sans-serif;
  font-weight: 700;
  font-size: 14px;
  letter-spacing: 0.2px;
}

.sec-no {
  text-align: right;
}

.sec-count {
  font-size: 15px;
}

.sec-fill {
  background: #64497b;
}

.gap-row {
  height: 9px;
}

.dotline {
  border-bottom: 1px dotted #222;
}

.gutter.dotted {
  position: relative;
}

.gutter.dotted::after {
  content: "";
  position: absolute;
  left: 17px;
  top: 50%;
  width: 2px;
  height: 2px;
  margin-top: -1px;
  background: #111;
}

.task {
  height: 16px;
}

.task-main {
  display: grid;
  grid-template-columns: 28px 278px 82px;
  grid-template-rows: 15px;
  padding-left: 104px;
  border-bottom: 1px dotted #222;
  font-family: "Liberation Sans", sans-serif;
  font-size: 12px;
  line-height: 19px;
  color: #222;
}

.task-cells {
  border-left: 1px solid #666;
}

.cell {
  display: flex;
  align-items: center;
  justify-content: center;
  box-sizing: border-box;
  height: 16px;
  border-bottom: 1px dotted #111;
  background: #f5f6f6;
}

.cell.sat {
  background: #35819a;
  border-right: 1px solid #d6f2f4;
}

.cell.sun {
  background: #35819a;
}

.cell.last {
  border-right: 1px solid #777;
}

.sec-gap {
  height: 7px;
}

.tint {
  background: #f6f1f8;
}

.watermark {
  position: absolute;
  left: 40px;
  top: 622px;
  font-family: "Liberation Sans", sans-serif;
  font-size: 10px;
  color: #e2e2e2;
}

.active-cell {
  position: absolute;
  left: 436px;
  top: 556px;
  width: 84px;
  height: 18px;
  box-sizing: border-box;
  border: 2px solid #000;
}

.drop-btn {
  position: absolute;
  left: 520px;
  top: 558px;
  width: 14px;
  height: 15px;
  display: flex;
  align-items: center;
  justify-content: center;
  background: #b7bdc6;
}

.dropdown {
  position: absolute;
  left: 390px;
  top: 573px;
  width: 146px;
  height: 76px;
  box-sizing: border-box;
  margin: 0;
  padding: 0;
  list-style: none;
  background: #f8f8f8;
  border: 1px solid #000;
  font-size: 11px;
  letter-spacing: 0.4px;
  color: #222;
}

.dropdown li {
  height: 15px;
  line-height: 20px;
  padding-left: 5px;
}

.dropdown li.hot {
  background: #3399ff;
  color: #e3f6ff;
}

.hand {
  position: absolute;
  left: 511px;
  top: 603px;
}
</style>
